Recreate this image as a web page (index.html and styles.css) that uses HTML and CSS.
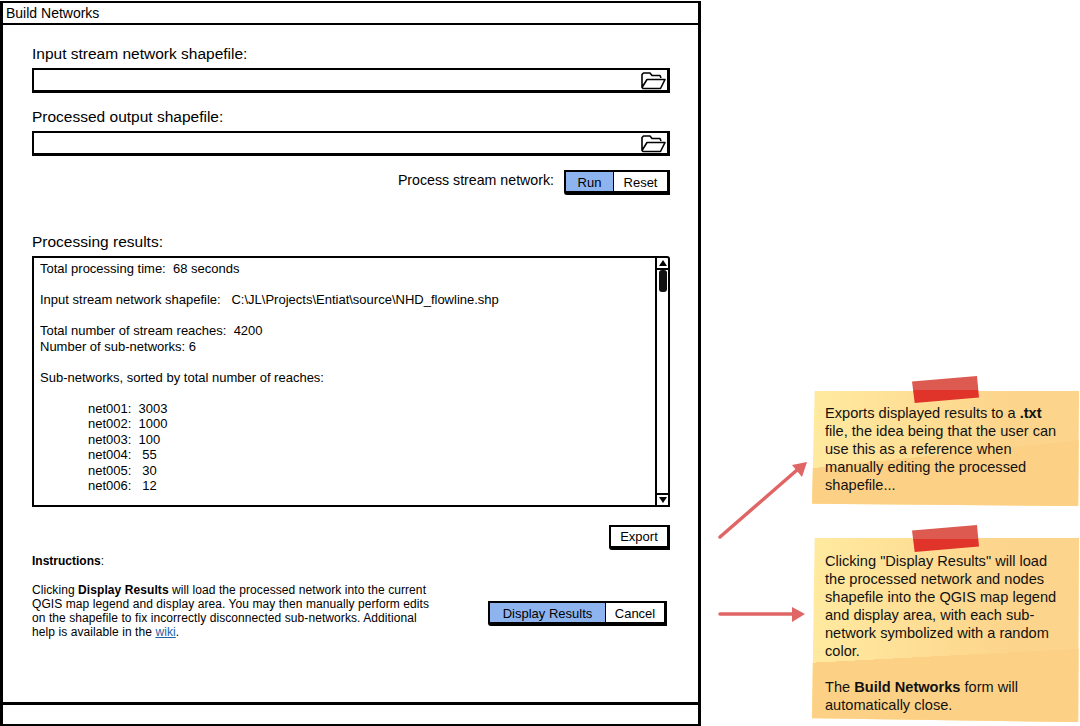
FILE: index.html
```html
<!DOCTYPE html>
<html lang="en">
<head>
<meta charset="UTF-8">
<meta name="viewport" content="width=device-width, initial-scale=1.0">
<title>Build Networks</title>
<link rel="stylesheet" href="styles.css">
</head>
<body>
<div class="window">
    <div class="titlebar">Build Networks</div>
    <div class="content">
        <div class="label">Input stream network shapefile:</div>
        <div class="field">
            <svg class="folder" width="26" height="19" viewBox="0 0 26 19"><path d="M2 16.500V3.500L3.500 2H10L12 4.500H20L21 7M2 16.500L7 8.500H25L20.500 17.500H3Z"/></svg>
        </div>
        <div class="label label-next">Processed output shapefile:</div>
        <div class="field">
            <svg class="folder" width="26" height="19" viewBox="0 0 26 19"><path d="M2 16.500V3.500L3.500 2H10L12 4.500H20L21 7M2 16.500L7 8.500H25L20.500 17.500H3Z"/></svg>
        </div>
        <div class="run-row">
            <span>Process stream network:</span>
            <div class="btn-group">
                <div class="btn btn-blue btn-run">Run</div>
                <div class="btn btn-reset">Reset</div>
            </div>
        </div>
        <div class="label label-results">Processing results:</div>
        <div class="results">
            <div class="results-text">
                <div>Total processing time:&nbsp; 68 seconds</div>
                <div class="gap">Input stream network shapefile:&nbsp;&nbsp; C:\JL\Projects\Entiat\source\NHD_flowline.shp</div>
                <div class="gap">Total number of stream reaches:&nbsp; 4200</div>
                <div>Number of sub-networks: 6</div>
                <div class="gap">Sub-networks, sorted by total number of reaches:</div>
                <div class="gap net">net001:&nbsp; 3003</div>
                <div class="net">net002:&nbsp; 1000</div>
                <div class="net">net003:&nbsp; 100</div>
                <div class="net">net004:&nbsp;&nbsp; 55</div>
                <div class="net">net005:&nbsp;&nbsp; 30</div>
                <div class="net">net006:&nbsp;&nbsp; 12</div>
            </div>
            <div class="scrollbar">
                <div class="arrow-box"><span class="arrow-up"></span></div>
                <div class="track"><div class="thumb"></div></div>
                <div class="arrow-box arrow-box-down"><span class="arrow-down"></span></div>
            </div>
        </div>
        <div class="export-row">
            <div class="btn-group"><div class="btn btn-export">Export</div></div>
        </div>
        <div class="lower">
            <div class="instructions">
                <div><b>Instructions</b>:</div>
                <p>Clicking <b>Display Results</b> will load the processed network into the current QGIS map legend and display area. You may then manually perform edits on the shapefile to fix incorrectly disconnected sub-networks. Additional help is available in the <a href="#">wiki</a>.</p>
            </div>
            <div class="btn-group lower-buttons">
                <div class="btn btn-blue btn-display">Display Results</div>
                <div class="btn btn-cancel">Cancel</div>
            </div>
        </div>
    </div>
    <div class="statusbar"></div>
</div>

<div class="side">
    <div class="note note-first">
        <div class="tape"></div>
        Exports displayed results to a <b>.txt</b> file, the idea being that the user can use this as a reference when manually editing the processed shapefile...
    </div>
    <div class="note note-second">
        <div class="tape"></div>
        Clicking "Display Results" will load the processed network and nodes shapefile into the QGIS map legend and display area, with each sub-network symbolized with a random color.
        <br><br>
        The <b>Build Networks</b> form will automatically close.
    </div>
</div>

<svg class="arrows" width="1080" height="726" viewBox="0 0 1080 726">
    <path class="shaft" d="M720 537L797 470"/>
    <polygon points="807,462 792,465 802,477"/>
    <path class="shaft" d="M720 614H794"/>
    <polygon points="805,614 792,607 792,622"/>
</svg>
</body>
</html>
```

FILE: styles.css
```css
html, body {
    margin: 0;
    padding: 0;
}

body {
    font-family: "Liberation Sans", Arial, sans-serif;
    color: #000;
    background-color: #fff;
    width: 1080px;
    height: 726px;
    display: flex;
    align-items: flex-start;
    overflow: hidden;
    position: relative;
}

.window {
    box-sizing: border-box;
    width: 701px;
    height: 725px;
    margin-top: 1px;
    flex-shrink: 0;
    border: 2px solid #000;
    border-left-width: 3px;
    border-right-width: 3px;
    display: flex;
    flex-direction: column;
}

.titlebar {
    height: 20px;
    line-height: 21px;
    padding-left: 3px;
    font-size: 14px;
    border-bottom: 2px solid #000;
}

.content {
    flex: 1;
    padding: 20px 28px 0 29px;
}

.statusbar {
    height: 19px;
    border-top: 3px solid #000;
}

.label {
    font-size: 15.500px;
    line-height: 18px;
    margin-bottom: 5px;
}

.label-next {
    margin-top: 15px;
}

.label-results {
    margin-top: 38px;
}

.field {
    box-sizing: border-box;
    height: 25px;
    border: 2px solid #000;
    border-bottom-width: 3px;
    border-right-width: 3px;
    display: flex;
    justify-content: flex-end;
    align-items: center;
    padding-right: 1px;
}

.folder {
    fill: none;
    stroke: #000;
    stroke-width: 1.600;
    stroke-linejoin: round;
}

.run-row {
    display: flex;
    justify-content: flex-end;
    align-items: flex-start;
    gap: 10px;
    margin-top: 14px;
    font-size: 14.200px;
    line-height: 20px;
}

.btn-group {
    box-sizing: border-box;
    display: flex;
    height: 25px;
    border: 2px solid #000;
    border-bottom-width: 4px;
    border-right-width: 3px;
    border-bottom-left-radius: 3px;
}

.btn {
    font-size: 13px;
    line-height: 21px;
    text-align: center;
}

.btn-blue {
    background-color: #8eb4f0;
    border-right: 1px solid #000;
}

.btn-run {
    width: 47px;
}

.btn-reset {
    width: 53px;
}

.export-row {
    display: flex;
    justify-content: flex-end;
    margin-top: 18px;
}

.btn-export {
    width: 56px;
    line-height: 19px;
}

.results {
    box-sizing: border-box;
    height: 251px;
    border: 2px solid #000;
    border-top-right-radius: 3px;
    display: flex;
}

.results-text {
    flex: 1;
    padding: 3px 0 0 6px;
    font-size: 13px;
    line-height: 15.500px;
}

.gap {
    margin-top: 15.500px;
}

.net {
    padding-left: 48px;
}

.scrollbar {
    width: 11px;
    border-left: 2px solid #000;
    display: flex;
    flex-direction: column;
}

.arrow-box {
    height: 10px;
    border-bottom: 2px solid #000;
    display: flex;
    justify-content: center;
    align-items: center;
}

.arrow-box-down {
    border-bottom: none;
    border-top: 2px solid #000;
}

.arrow-up, .arrow-down {
    width: 0;
    height: 0;
    border-left: 4px solid transparent;
    border-right: 4px solid transparent;
}

.arrow-up {
    border-bottom: 6px solid #000;
}

.arrow-down {
    border-top: 6px solid #000;
}

.track {
    flex: 1;
    display: flex;
    justify-content: center;
    padding-left: 1px;
}

.thumb {
    width: 8px;
    height: 22px;
    background-color: #111;
    border-radius: 3px;
}

.lower {
    display: flex;
    justify-content: space-between;
    align-items: flex-start;
    margin-top: 4px;
    padding-right: 3px;
}

.instructions {
    width: 402px;
    font-size: 12px;
    line-height: 14px;
}

.instructions p {
    margin: 15px 0 0 0;
    letter-spacing: 0.080px;
}

.instructions a {
    color: #1f5fa8;
}

.lower-buttons {
    margin-top: 47px;
}

.btn-display {
    width: 115px;
}

.btn-cancel {
    width: 58px;
}

.side {
    flex: 1;
    padding: 391px 1px 0 111px;
}

.note {
    box-sizing: border-box;
    position: relative;
    padding: 13px 14px 0 13px;
    font-size: 14.600px;
    line-height: 18px;
    color: #111;
}

.note::before {
    content: "";
    position: absolute;
    inset: 0;
    z-index: -1;
    background:
        linear-gradient(var(--fold-angle), transparent var(--fold), #fdd185 var(--fold)),
        linear-gradient(90deg, #ffeaa0, #fdd48b 75%);
    clip-path: polygon(1% 0, 100% 0, 99.700% 100%, 0 98%);
}

.note-first {
    height: 115px;
    --fold: 54%;
    --fold-angle: 174deg;
}

.note-second {
    height: 184px;
    margin-top: 32px;
    padding-top: 14px;
    --fold: 63%;
    --fold-angle: 177deg;
}

.tape {
    position: absolute;
    left: 100px;
    top: -15px;
    width: 67px;
    height: 27px;
    background: linear-gradient(#dc5a50 0, #dc5a50 50%, #e0332a 52%);
    clip-path: polygon(0 20%, 97% 0, 100% 80%, 4% 100%);
}

.note-second .tape {
    top: -13px;
}

.arrows {
    position: absolute;
    left: 0;
    top: 0;
    pointer-events: none;
}

.arrows polygon {
    fill: #e06666;
}

.shaft {
    fill: none;
    stroke: #e06666;
    stroke-width: 3.500;
    stroke-linecap: round;
}
```
